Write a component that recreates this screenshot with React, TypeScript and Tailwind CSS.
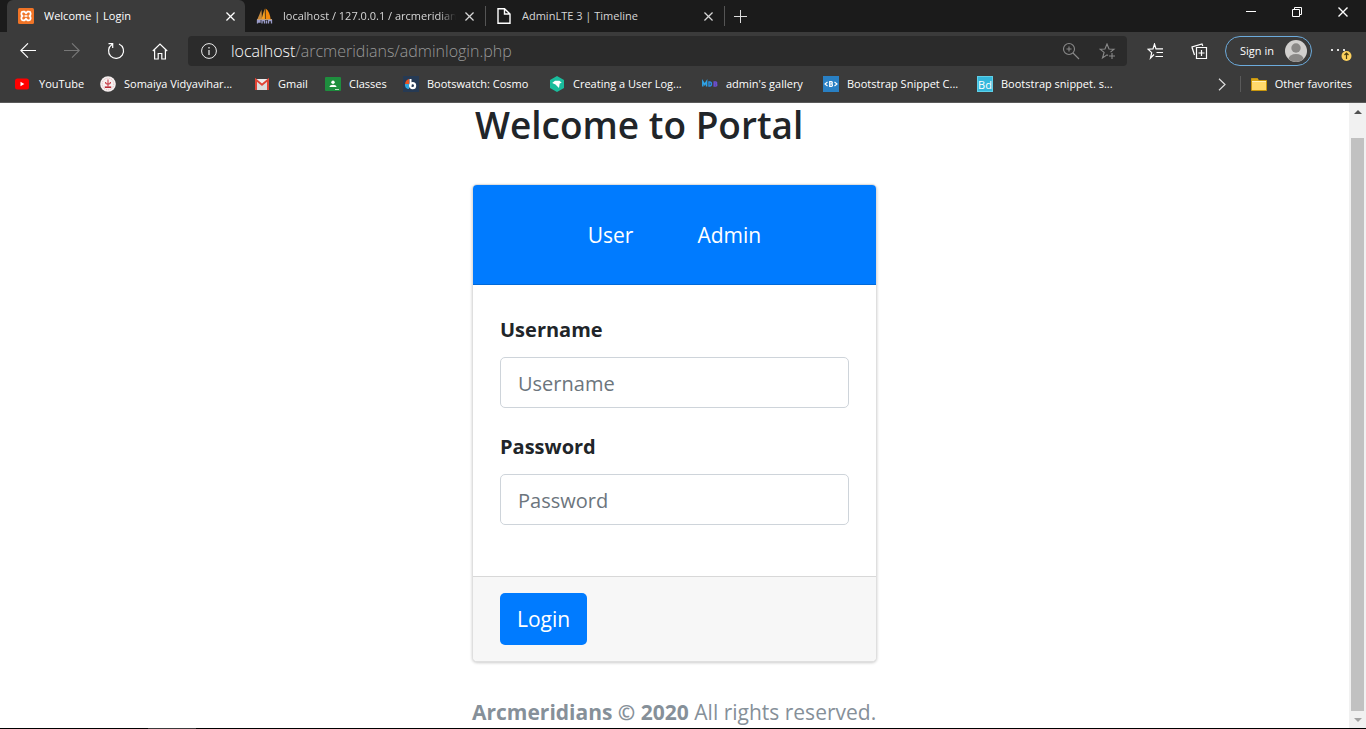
import type { ReactNode } from "react";

type Bookmark = { label: string; width: string; icon: ReactNode };

function XamppIcon() {
  return (
    <svg width="16" height="16" viewBox="0 0 16 16" className="shrink-0">
      <rect width="16" height="16" rx="1.5" fill="#f07427" />
      <path d="M5 3.600h1.400L8 5.200l1.600-1.600H11c1.900 0 2.200 3 .6 4.400 1.600 1.400 1.300 4.400-.6 4.400H9.600L8 10.800l-1.600 1.600H5c-1.900 0-2.200-3-.6-4.400C2.800 6.600 3.100 3.600 5 3.600z" fill="none" stroke="#fff" strokeWidth="1.800" />
      <path d="M6.500 8h3" stroke="#fff" strokeWidth="1.600" />
    </svg>
  );
}

function SailIcon() {
  return (
    <svg width="18" height="16" viewBox="0 0 18 16" className="shrink-0">
      <path d="M1.500 11 5.500 1.500 6 11z" fill="#c98a3c" />
      <path d="M5.500 11 8.700.5 9 11z" fill="#f9a11f" />
      <path d="M9.600 11V.5c3 2 4.500 6 5 10.500z" fill="#f58a0b" />
      <path d="M1 11.500h15" stroke="#d0a060" strokeWidth="1" />
      <path d="M1.500 15.500v-3h2.500v1.500H1.500m4.500 1.500v-3h2.500v3m2-3v3m2 0v-3h3v3" fill="none" stroke="#9a9bc8" strokeWidth="1.300" />
    </svg>
  );
}

function PageIcon() {
  return (
    <svg width="16" height="18" viewBox="0 0 16 18" fill="none" stroke="#fff" strokeWidth="1.400" className="shrink-0">
      <path d="M2 1.700h6.500L14 7v9.300H2zM8.500 1.700V7H14" />
    </svg>
  );
}

function CloseIcon({ size = 9 }: { size?: number }) {
  return (
    <svg width={size} height={size} viewBox="0 0 10 10" stroke="currentColor" strokeWidth="1.400">
      <path d="m.5.5 9 9M9.500.5l-9 9" />
    </svg>
  );
}

const bookmarks: Bookmark[] = [
  {
    label: "YouTube",
    width: "w-[85px]",
    icon: (
      <svg width="16" height="16" viewBox="0 0 16 16">
        <rect x="0" y="2.500" width="14" height="11" rx="2.500" fill="#f00" />
        <path d="M5.500 5.700v4.600L9.300 8z" fill="#fff" />
      </svg>
    ),
  },
  {
    label: "Somaiya Vidyavihar...",
    width: "w-[154px]",
    icon: (
      <svg width="16" height="16" viewBox="0 0 16 16">
        <circle cx="8" cy="8" r="7.800" fill="#f6f0f0" />
        <circle cx="8" cy="8" r="5.800" fill="none" stroke="#e0b4b6" strokeDasharray="1 1" />
        <path d="M8 3.500v7M5.500 6c0 2.800 5 2.800 5 0" stroke="#c8404a" strokeWidth="1.100" fill="none" />
        <path d="M4.800 11.200h6.400" stroke="#b5202c" strokeWidth="1.500" />
      </svg>
    ),
  },
  {
    label: "Gmail",
    width: "w-[71px]",
    icon: (
      <svg width="16" height="16" viewBox="0 0 16 16">
        <path d="M1 3h14v11H1z" fill="#eee" />
        <path d="M3 14V6l5 4 5-4v8z" fill="#dcdcdc" />
        <path d="M2 14V3.800l6 5 6-5V14" fill="none" stroke="#e04335" strokeWidth="2" />
      </svg>
    ),
  },
  {
    label: "Classes",
    width: "w-[78px]",
    icon: (
      <svg width="16" height="16" viewBox="0 0 16 16">
        <rect y="1" width="16" height="14" rx="1" fill="#1e8e3e" />
        <circle cx="8" cy="6.200" r="1.700" fill="#fff" />
        <path d="M4.500 11c0-3 7-3 7 0z" fill="#fff" />
        <path d="M10 13.500h4" stroke="#bfe3c9" />
      </svg>
    ),
  },
  {
    label: "Bootswatch: Cosmo",
    width: "w-[146px]",
    icon: (
      <svg width="16" height="16" viewBox="0 0 16 16">
        <rect width="16" height="16" fill="#263a54" />
        <path d="M2 8a6 6 0 0 1 4-5v5z" fill="#e95420" />
        <path d="M2 8h4v5a4 4 0 0 1-4-5z" fill="#2ea6de" />
        <path d="M7.500 3v7" stroke="#fff" strokeWidth="2" />
        <circle cx="9.600" cy="9.700" r="2.500" fill="none" stroke="#fff" strokeWidth="2.200" />
      </svg>
    ),
  },
  {
    label: "Creating a User Log...",
    width: "w-[153px]",
    icon: (
      <svg width="16" height="16" viewBox="0 0 16 16">
        <path d="m8 0 7 4v8l-7 4-7-4V4z" fill="#1abc9c" />
        <path d="M3.200 7 6 4.700h4.500l2.200 2-2 .7-.7 4.600L6.500 8.500z" fill="#fff" />
      </svg>
    ),
  },
  {
    label: "admin's gallery",
    width: "w-[121px]",
    icon: (
      <svg width="16" height="16" viewBox="0 0 16 16" fill="none" strokeWidth="1.500">
        <path d="M.8 10.500v-5l1.900 3 1.900-3v5" stroke="#2fa4e7" />
        <path d="M7 6v4h.9c2 0 2-4 0-4z" stroke="#2b8fe0" />
        <path d="M12.200 6v4h1.500c1.500 0 1.500-2 0-2 1.300 0 1.300-2 0-2zm0 2h1.500" stroke="#6b4fd0" />
      </svg>
    ),
  },
  {
    label: "Bootstrap Snippet C...",
    width: "w-[154px]",
    icon: (
      <svg width="16" height="16" viewBox="0 0 16 16">
        <rect width="16" height="16" fill="#2980c4" />
        <path d="M4.500 6 2 8l2.500 2M11.500 6 14 8l-2.500 2" fill="none" stroke="#fff" strokeWidth="1.100" />
        <path d="M6.700 5.700v4.600h1.800c1.300 0 1.300-2.300 0-2.300 1.100 0 1.100-2.300 0-2.300zm0 2.300h1.800" fill="none" stroke="#fff" strokeWidth="1.200" />
      </svg>
    ),
  },
  {
    label: "Bootstrap snippet. s...",
    width: "w-[154px]",
    icon: (
      <span className="flex size-4 items-center justify-center border border-[#5fd0e8] bg-[#35b8dc] text-[11px] leading-none text-white">
        Bd
      </span>
    ),
  },
];

function NavButton({ label, children, className = "text-white" }: { label: string; children: ReactNode; className?: string }) {
  return (
    <button aria-label={label} className={`flex h-8 w-11 items-center justify-center ${className}`}>
      {children}
    </button>
  );
}

function TabStrip() {
  return (
    <div className="flex h-8 items-start bg-[#1b1b1b] pl-[7px] text-[11px] text-white">
      <div className="flex h-8 w-[238px] items-center rounded-t-md bg-[#3b3b3b] pr-[5px] pl-[11px]">
        <XamppIcon />
        <span className="ml-[10px] flex-1 truncate">Welcome | Login</span>
        <button aria-label="Close tab" className="p-[5px]"><CloseIcon /></button>
      </div>
      <div className="flex h-8 w-[240px] items-center pr-[6px] pl-[11px] text-[#d6d6d6]">
        <SailIcon />
        <span className="mr-1 ml-[9px] flex-1 overflow-hidden mask-r-from-90% whitespace-nowrap">localhost / 127.0.0.1 / arcmeridians</span>
        <button aria-label="Close tab" className="p-[5px]"><CloseIcon /></button>
      </div>
      <div className="mt-1.5 h-5 w-px bg-[#555]" />
      <div className="flex h-8 w-[238px] items-center pr-[6px] pl-[10px] text-[#d6d6d6]">
        <PageIcon />
        <span className="ml-[10px] flex-1 truncate">AdminLTE 3 | Timeline</span>
        <button aria-label="Close tab" className="p-[5px]"><CloseIcon /></button>
      </div>
      <div className="mt-1.5 h-5 w-px bg-[#555]" />
      <button aria-label="New tab" className="flex h-8 w-[31px] items-center justify-center">
        <svg width="13" height="13" viewBox="0 0 13 13" stroke="#ddd"><path d="M6.500 0v13M0 6.500h13" /></svg>
      </button>
      <div className="ml-auto flex h-6">
        <button aria-label="Minimize" className="flex w-[46px] items-center justify-center">
          <svg width="10" height="10" viewBox="0 0 10 10" stroke="#fff"><path d="M0 4.500h10" /></svg>
        </button>
        <button aria-label="Restore" className="flex w-[46px] items-center justify-center">
          <svg width="10" height="10" viewBox="0 0 10 10" fill="none" stroke="#fff"><path d="M.5 2.500h7v7h-7zM2.500 2.500v-2h7v7h-2" /></svg>
        </button>
        <button aria-label="Close window" className="flex w-[46px] items-center justify-center"><CloseIcon size={10} /></button>
      </div>
    </div>
  );
}

function Toolbar() {
  return (
    <div className="flex h-[38px] items-center bg-[#3b3b3b] pl-[6px] text-white">
      <NavButton label="Back">
        <svg width="16" height="16" viewBox="0 0 16 16" fill="none" stroke="currentColor" strokeWidth="1.100"><path d="M16 7.500H.8M8 .3.800 7.500 8 14.700" /></svg>
      </NavButton>
      <NavButton label="Forward" className="text-[#777]">
        <svg width="16" height="16" viewBox="0 0 16 16" fill="none" stroke="currentColor" strokeWidth="1.100"><path d="M0 7.500h15.200M8 .3l7.200 7.200L8 14.700" /></svg>
      </NavButton>
      <NavButton label="Reload">
        <svg width="18" height="18" viewBox="0 0 18 18" fill="none" stroke="currentColor" strokeWidth="1.200"><path d="M12 2A7.500 7.500 0 1 1 5 2.600M1.500 1.700h4.200v4.200" /></svg>
      </NavButton>
      <NavButton label="Home">
        <svg width="16" height="17" viewBox="0 0 16 17" fill="none" stroke="currentColor" strokeWidth="1.200"><path d="M.8 8 8 1l7.200 7M2.600 6.500V16h3.600v-5.500h3.600V16h3.600V6.500" /></svg>
      </NavButton>
      <div className="ml-[6px] flex h-[30px] flex-1 items-center rounded bg-[#2b2b2b] pr-[11px] pl-[13px]">
        <svg width="16" height="16" viewBox="0 0 16 16" fill="none" stroke="#eee" className="shrink-0">
          <circle cx="8" cy="8" r="7.400" />
          <path d="M8 7v5M8 4v1.500" strokeWidth="1.200" />
        </svg>
        <a href="#" className="ml-[14px] flex-1 text-base font-light whitespace-nowrap text-[#999]">
          <span className="text-white">localhost</span>/arcmeridians/adminlogin.php
        </a>
        <button aria-label="Zoom" className="mr-[19px]">
          <svg width="18" height="18" viewBox="0 0 18 18" fill="none" stroke="#8a8a8a" strokeWidth="1.100"><circle cx="7" cy="7" r="5.500" /><path d="m11 11 6 6M4.500 7h5M7 4.500v5" /></svg>
        </button>
        <button aria-label="Add to favorites">
          <svg width="17" height="17" viewBox="0 0 17 17" fill="none" stroke="#8a8a8a" strokeWidth="1.100"><path d="M9 12.500 8 11.800 3.500 15l1.600-5.600L1 6.200l5-.2 2-5 2 5 5 .2-3.500 3M10 13h6M13 10v6" /></svg>
        </button>
      </div>
      <div className="flex w-[239px] items-center">
        <button aria-label="Favorites" className="ml-[20px]">
          <svg width="17" height="17" viewBox="0 0 17 17" fill="none" stroke="#fff" strokeWidth="1.200"><path d="M7 11.500 3.500 15l1.200-5.400L1 6.200l5-.3L7.500 1 9 5.900h7M9.500 9.500H16M8.500 13.500H16" /></svg>
        </button>
        <button aria-label="Collections" className="ml-[27px]">
          <svg width="17" height="17" viewBox="0 0 17 17" fill="none" stroke="#fff" strokeWidth="1.200"><path d="M5.500 4.500h10v11h-10zM10.500 7v6M7.500 10h6M3.500 12 1 4l10-3 .8 2M1 4.500 3.500 12" /></svg>
        </button>
        <button className="ml-[17px] flex h-[30px] w-[87px] items-center justify-between rounded-full border border-[#6cabdc] pr-[3px] pl-[14px] text-[11px]">
          Sign in
          <svg width="24" height="24" viewBox="0 0 24 24">
            <circle cx="12" cy="12" r="11" fill="#d2d0ce" />
            <circle cx="12" cy="9" r="4.700" fill="#8a8886" />
            <path d="M4.500 20a7.500 5 0 0 1 15 0A11 11 0 0 1 4.500 20z" fill="#8a8886" />
          </svg>
        </button>
        <button aria-label="Settings" className="ml-[18px]">
          <svg width="24" height="20" viewBox="0 0 24 20">
            <path d="M1 8h2v2H1zM7 8h2v2H7zM13 8h2v2h-2z" fill="#ddd" />
            <circle cx="16.500" cy="15" r="5" fill="#fcd05c" />
            <path d="M16.500 18v-6M14.500 14l2-2 2 2" fill="none" stroke="#4a3c10" strokeWidth="1.200" />
          </svg>
        </button>
      </div>
    </div>
  );
}

function BookmarksBar() {
  return (
    <nav className="flex h-[33px] items-start border-b border-[#5a5a5a] bg-[#3b3b3b] pr-[14px] pl-[15px] text-[11px] text-white">
      {bookmarks.map((item) => (
        <a key={item.label} href="#" className={`flex h-7 shrink-0 items-center gap-2 whitespace-nowrap ${item.width}`}>
          <span className="shrink-0">{item.icon}</span>
          {item.label}
        </a>
      ))}
      <button aria-label="More favorites" className="ml-auto flex h-7 items-center">
        <svg width="8" height="13" viewBox="0 0 8 13" fill="none" stroke="#ddd" strokeWidth="1.200"><path d="m1 .8 6 5.700-6 5.700" /></svg>
      </button>
      <div className="mt-1.5 ml-[14px] h-4 w-px bg-[#5a5a5a]" />
      <a href="#" className="ml-[10px] flex h-7 items-center gap-2 whitespace-nowrap">
        <svg width="16" height="13" viewBox="0 0 16 13"><path d="M.5.500h6l1 2h8v10H.5z" fill="#ffd96b" stroke="#c8960c" /><path d="M1 3.500h14" stroke="#fff0b8" /><path d="M1 1h5.500l1 2H1z" fill="#d9a514" /></svg>
        Other favorites
      </a>
    </nav>
  );
}

const labelClass = "mb-[9px] block text-xl leading-9 font-bold";
const inputClass =
  "w-full rounded-[5px] border border-[#ced4da] bg-white px-[17px] pt-[11px] pb-[9px] text-xl leading-[29px] text-[#495057] placeholder:text-[#6c757d]";

function LoginCard() {
  return (
    <form className="w-full overflow-hidden rounded-[5px] border border-[#dfdfdf] bg-white shadow-[0_1px_3px_rgba(0,0,0,0.2)]">
      <div className="flex h-[100px] items-center justify-center gap-[64px] border-b border-[#0069d9] bg-[#007bff] pt-[2px] text-[21px] text-white">
        <a href="#">User</a>
        <a href="#">Admin</a>
      </div>
      <div className="px-[27px] pt-[27px] pb-[51px]">
        <label htmlFor="username" className={labelClass}>Username</label>
        <input id="username" type="text" placeholder="Username" className={inputClass} />
        <label htmlFor="password" className={`mt-[21px] ${labelClass}`}>Password</label>
        <input id="password" type="password" placeholder="Password" className={inputClass} />
      </div>
      <div className="border-t border-[#d8d8d8] bg-[#f7f7f7] px-[27px] py-4">
        <button type="button" className="h-[52px] rounded-[5px] bg-[#007bff] px-[17px] pt-[2px] text-[21px] text-white">Login</button>
      </div>
    </form>
  );
}

function Scrollbar() {
  return (
    <div aria-hidden="true" className="flex w-[17px] shrink-0 flex-col items-center bg-[#f1f1f1]">
      <svg width="17" height="17" viewBox="0 0 17 17"><path d="M5 11h8L9 7z" fill="#505050" /></svg>
      <div className="mt-[18px] w-[13px] flex-1 bg-[#c1c1c1]" />
      <svg width="17" height="17" viewBox="0 0 17 17"><path d="M5 7h8l-4 4z" fill="#a3a3a3" /></svg>
    </div>
  );
}

export default function App() {
  return (
    <div className="flex h-screen flex-col overflow-hidden bg-white font-['Open_Sans','Liberation_Sans',sans-serif]">
      <header>
        <TabStrip />
        <Toolbar />
        <BookmarksBar />
      </header>
      <div className="flex min-h-0 flex-1">
        <main className="flex flex-1 justify-center text-[#212529]">
          <div className="w-[405px]">
            <h1 className="mb-[38px] pl-[3px] text-[37px] leading-[43px] font-semibold whitespace-nowrap">Welcome to Portal</h1>
            <LoginCard />
            <p className="mt-[34px] text-[21px] leading-8 whitespace-nowrap text-[#869099]">
              <strong>Arcmeridians © 2020</strong> All rights reserved.
            </p>
          </div>
        </main>
        <Scrollbar />
      </div>
      <div className="flex h-px shrink-0 bg-black">
        <div className="ml-[148px] w-12 bg-[#3a3a3a]" />
      </div>
    </div>
  );
}
